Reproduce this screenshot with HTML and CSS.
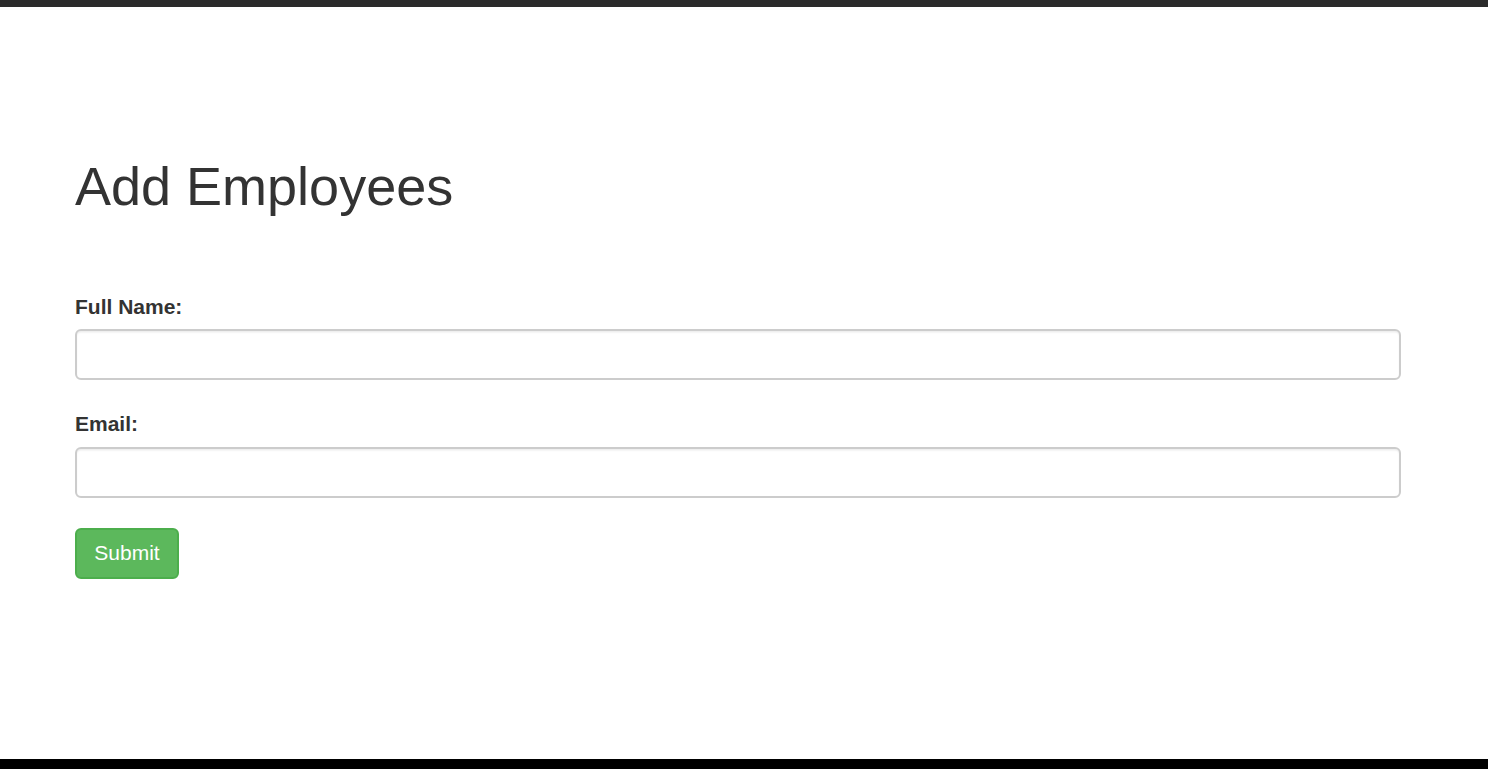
FILE: index.html
```html
<!DOCTYPE html>
<html lang="en">
<head>
<meta charset="utf-8">
<title>Add Employees</title>
<link rel="stylesheet" href="styles.css">
</head>
<body>
<div class="topbar"></div>
<main class="content">
  <h1 class="title">Add Employees</h1>
  <form class="form">
    <div class="group">
      <label class="label" for="name">Full Name:</label>
      <input class="input" id="name" type="text">
    </div>
    <div class="group">
      <label class="label" for="email">Email:</label>
      <input class="input" id="email" type="email">
    </div>
    <button class="btn" type="button">Submit</button>
  </form>
</main>
<footer class="footer"></footer>
</body>
</html>
```
FILE: styles.css
```css
html, body {
  margin: 0;
  padding: 0;
  height: 100%;
}
body {
  display: flex;
  flex-direction: column;
  min-height: 100vh;
  background: #fff;
  font-family: "Liberation Sans", Arial, sans-serif;
  color: #333;
}
.topbar {
  height: 7px;
  background: #2b2b2b;
  flex: none;
}
.content {
  padding-left: 75px;
  width: 1326px;
}
.title {
  font-size: 54px;
  font-weight: 400;
  line-height: 59.4px;
  margin: 150.4px 0 0 0;
  color: #333;
}
.form {
  margin-top: 75px;
  display: flex;
  flex-direction: column;
}
.group {
  display: flex;
  flex-direction: column;
  margin-bottom: 29px;
}
.group:last-of-type {
  margin-bottom: 30px;
}
.label {
  font-size: 21px;
  font-weight: 700;
  line-height: 30px;
  margin-bottom: 7.5px;
  color: #333;
}
.input {
  box-sizing: border-box;
  width: 100%;
  height: 51px;
  border: 2px solid #ccc;
  border-radius: 6px;
  box-shadow: inset 0 1.5px 1.5px rgba(0,0,0,.075);
  padding: 9px 18px;
  font-size: 21px;
  font-family: inherit;
  outline: none;
  background: #fff;
}
.btn {
  align-self: flex-start;
  box-sizing: border-box;
  width: 104px;
  height: 51px;
  padding: 0;
  font-family: inherit;
  font-size: 21px;
  color: #fff;
  background: #5cb85c;
  border: 2px solid #4cae4c;
  border-radius: 6px;
  cursor: pointer;
}
.footer {
  margin-top: auto;
  height: 10px;
  background: #000;
  flex: none;
}
```
